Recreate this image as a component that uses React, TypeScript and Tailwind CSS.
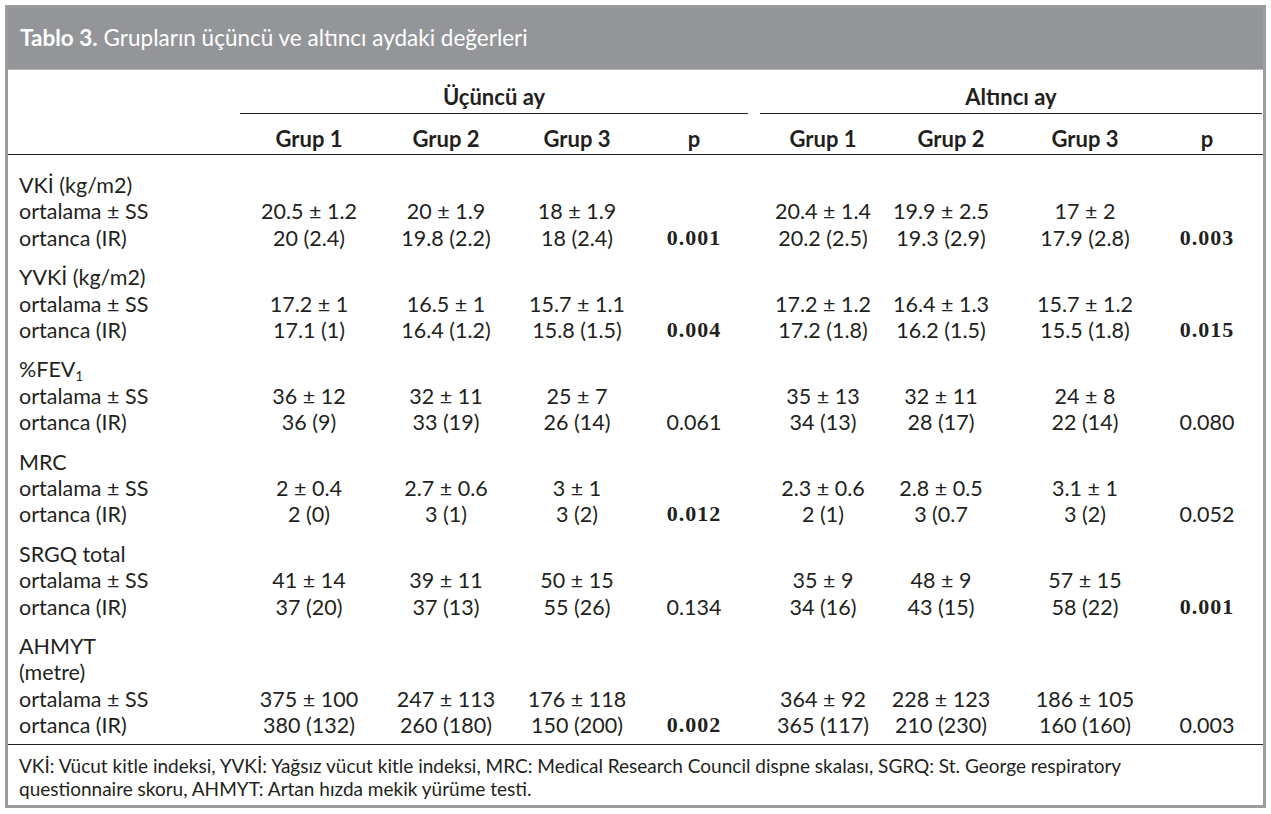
import React from "react";

type Row = { label: string; a: string[]; pA?: string; pAB?: boolean; b: string[]; pB?: string; pBB?: boolean };
type Group = { title: React.ReactNode[]; rows: Row[] };

const groups: Group[] = [
  {
    title: ["VKİ (kg/m2)"],
    rows: [
      { label: "ortalama ± SS", a: ["20.5 ± 1.2", "20 ± 1.9", "18 ± 1.9"], b: ["20.4 ± 1.4", "19.9 ± 2.5", "17 ± 2"] },
      { label: "ortanca (IR)", a: ["20 (2.4)", "19.8 (2.2)", "18 (2.4)"], pA: "0.001", pAB: true, b: ["20.2 (2.5)", "19.3 (2.9)", "17.9 (2.8)"], pB: "0.003", pBB: true },
    ],
  },
  {
    title: ["YVKİ (kg/m2)"],
    rows: [
      { label: "ortalama ± SS", a: ["17.2 ± 1", "16.5 ± 1", "15.7 ± 1.1"], b: ["17.2 ± 1.2", "16.4 ± 1.3", "15.7 ± 1.2"] },
      { label: "ortanca (IR)", a: ["17.1 (1)", "16.4 (1.2)", "15.8 (1.5)"], pA: "0.004", pAB: true, b: ["17.2 (1.8)", "16.2 (1.5)", "15.5 (1.8)"], pB: "0.015", pBB: true },
    ],
  },
  {
    title: [
      <span key="f">
        %FEV<span className="relative top-[4px] text-[13px] leading-none">1</span>
      </span>,
    ],
    rows: [
      { label: "ortalama ± SS", a: ["36 ± 12", "32 ± 11", "25 ± 7"], b: ["35 ± 13", "32 ± 11", "24 ± 8"] },
      { label: "ortanca (IR)", a: ["36 (9)", "33 (19)", "26 (14)"], pA: "0.061", b: ["34 (13)", "28 (17)", "22 (14)"], pB: "0.080" },
    ],
  },
  {
    title: ["MRC"],
    rows: [
      { label: "ortalama ± SS", a: ["2 ± 0.4", "2.7 ± 0.6", "3 ± 1"], b: ["2.3 ± 0.6", "2.8 ± 0.5", "3.1 ± 1"] },
      { label: "ortanca (IR)", a: ["2 (0)", "3 (1)", "3 (2)"], pA: "0.012", pAB: true, b: ["2 (1)", "3 (0.7", "3 (2)"], pB: "0.052" },
    ],
  },
  {
    title: ["SRGQ total"],
    rows: [
      { label: "ortalama ± SS", a: ["41 ± 14", "39 ± 11", "50 ± 15"], b: ["35 ± 9", "48 ± 9", "57 ± 15"] },
      { label: "ortanca (IR)", a: ["37 (20)", "37 (13)", "55 (26)"], pA: "0.134", b: ["34 (16)", "43 (15)", "58 (22)"], pB: "0.001", pBB: true },
    ],
  },
  {
    title: ["AHMYT", "(metre)"],
    rows: [
      { label: "ortalama ± SS", a: ["375 ± 100", "247 ± 113", "176 ± 118"], b: ["364 ± 92", "228 ± 123", "186 ± 105"] },
      { label: "ortanca (IR)", a: ["380 (132)", "260 (180)", "150 (200)"], pA: "0.002", pAB: true, b: ["365 (117)", "210 (230)", "160 (160)"], pB: "0.003" },
    ],
  },
];

const cols = "grid grid-cols-[232px_138px_136px_126px_108px_12px_126px_110px_178px_66px_22px]";

function PCell({ v, bold }: { v?: string; bold?: boolean }) {
  if (!v) return <div />;
  return (
    <div
      className={
        bold
          ? "text-center font-bold text-[22px] tracking-[1px] [font-family:'Liberation_Serif',serif]"
          : "text-center"
      }
    >
      {v}
    </div>
  );
}

export default function App() {
  return (
    <div className="w-[1271px] h-[814px] bg-white pt-[5px] pl-[5px] text-[#231f20] [font-family:Lato,'Liberation_Sans',sans-serif]">
      <div className="w-[1261px] h-[803px] border-[3px] border-[#9b9c9e] flex flex-col">
        <div className="h-[62px] bg-[#939598] border-b border-[#b8b9bb] flex items-center pl-[12px] pb-[2px] text-white text-[22.5px]">
          <span className="font-bold">Tablo 3.</span>
          <span className="ml-[6px]">Grupların üçüncü ve altıncı aydaki değerleri</span>
        </div>

        {/* header row 1 */}
        <div className={`${cols} h-[42px] text-[22px] font-bold`}>
          <div />
          <div className="col-span-4 border-b-[1.5px] border-[#231f20] flex items-center justify-center pt-[10px]">Üçüncü ay</div>
          <div />
          <div className="col-span-5 border-b-[1.5px] border-[#231f20] flex items-center justify-center pt-[10px]">Altıncı ay</div>
        </div>
        {/* header row 2 */}
        <div className={`${cols} h-[43px] pt-[10px] text-[22px] font-bold border-b-[1.5px] border-[#231f20] items-center`}>
          <div />
          <div className="text-center">Grup 1</div>
          <div className="text-center">Grup 2</div>
          <div className="text-center">Grup 3</div>
          <div className="text-center">p</div>
          <div />
          <div className="text-center">Grup 1</div>
          <div className="text-center pl-[20px]">Grup 2</div>
          <div className="text-center">Grup 3</div>
          <div className="text-center">p</div>
          <div />
        </div>

        {/* body */}
        <div className="pt-[17px] pb-[5px] border-b-[1.5px] border-[#231f20] text-[21.5px] leading-[26.4px] flex flex-col gap-[13px]">
          {groups.map((g, gi) => (
            <div key={gi}>
              {g.title.map((t, ti) => (
                <div key={ti} className="pl-[11px] h-[26.4px]">
                  {t}
                </div>
              ))}
              {g.rows.map((r, ri) => (
                <div key={ri} className={cols}>
                  <div className="pl-[11px]">{r.label}</div>
                  {r.a.map((v, i) => (
                    <div key={i} className="text-center">
                      {v}
                    </div>
                  ))}
                  <PCell v={r.pA} bold={r.pAB} />
                  <div />
                  {r.b.map((v, i) => (
                    <div key={i} className="text-center">
                      {v}
                    </div>
                  ))}
                  <PCell v={r.pB} bold={r.pBB} />
                  <div />
                </div>
              ))}
            </div>
          ))}
        </div>

        {/* footnote */}
        <div className="pl-[11px] pr-[40px] pt-[9px] text-[19px] leading-[23px]">
          VKİ: Vücut kitle indeksi, YVKİ: Yağsız vücut kitle indeksi, MRC: Medical Research Council dispne skalası, SGRQ: St. George respiratory questionnaire skoru, AHMYT: Artan hızda mekik yürüme testi.
        </div>
      </div>
    </div>
  );
}
